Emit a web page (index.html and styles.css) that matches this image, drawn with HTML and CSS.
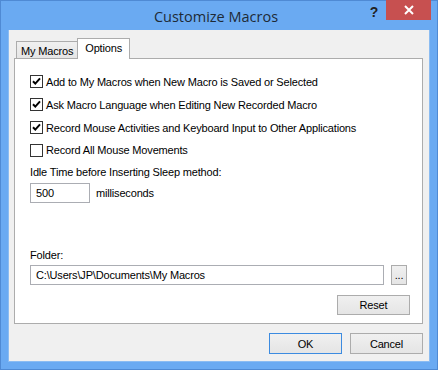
FILE: index.html
```html
<!DOCTYPE html>
<html lang="en">
<head>
  <meta charset="UTF-8">
  <meta name="viewport" content="width=device-width, initial-scale=1.0">
  <title>Customize Macros</title>
  <link rel="stylesheet" href="styles.css">
</head>
<body>
  <div class="window">
    <div class="titlebar">
      <div></div>
      <div class="title">Customize Macros</div>
      <div class="controls">
        <span class="help">?</span>
        <span class="close">
          <svg width="10" height="10" viewBox="0 0 10 10">
            <path d="M1 1 L9 9 M9 1 L1 9" stroke="#fff" stroke-width="2"/>
          </svg>
        </span>
      </div>
    </div>

    <div class="client">
      <div class="tabs">
        <div class="tab">My Macros</div>
        <div class="tab active">Options</div>
      </div>
      <div class="panel">
        <label class="check-row"><span class="box checked"></span>Add to My Macros when New Macro is Saved or Selected</label>
        <label class="check-row"><span class="box checked"></span>Ask Macro Language when Editing New Recorded Macro</label>
        <label class="check-row"><span class="box checked"></span>Record Mouse Activities and Keyboard Input to Other Applications</label>
        <label class="check-row short"><span class="box"></span>Record All Mouse Movements</label>
        <div class="label-row">Idle Time before Inserting Sleep method:</div>
        <div class="idle-row">
          <div class="field small">500</div>
          <span>milliseconds</span>
        </div>

        <div class="folder">
          <div class="label-row folder-label">Folder:</div>
          <div class="folder-row">
            <div class="field wide">C:\Users\JP\Documents\My Macros</div>
            <button class="btn dots">...</button>
          </div>
          <div class="reset-row">
            <button class="btn">Reset</button>
          </div>
        </div>
      </div>
      <div class="footer">
        <button class="btn default">OK</button>
        <button class="btn">Cancel</button>
      </div>
    </div>
  </div>
</body>
</html>
```

FILE: styles.css
```css
body {
  margin: 0;
  font-family: "Liberation Sans", Arial, sans-serif;
  font-size: 11px;
  letter-spacing: -0.17px;
  color: #000;
}
.window {
  width: 438px;
  height: 370px;
  box-sizing: border-box;
  border: 1px solid #4f8ad4;
  background-color: #6aaaf2;
  display: flex;
  flex-direction: column;
}
.titlebar {
  height: 29px;
  display: grid;
  grid-template-columns: 1fr auto 1fr;
  padding-right: 6px;
}
.title {
  font-family: "Open Sans", sans-serif;
  font-size: 14.5px;
  letter-spacing: 0;
  color: #1e2a36;
  align-self: center;
  padding-top: 1px;
}
.controls {
  justify-self: end;
  display: flex;
  align-items: flex-start;
}
.help {
  width: 24px;
  text-align: center;
  font-weight: bold;
  font-size: 14px;
  color: #222;
  padding-top: 3px;
}
.close {
  width: 45px;
  height: 20px;
  margin-top: -1px;
  background-color: #c75050;
  display: flex;
  align-items: center;
  justify-content: center;
}
.client {
  flex: 1;
  margin: 0 7px 7px 7px;
  background-color: #f0f0f0;
  border: 1px solid #8bbcf2;
  border-top: none;
  padding: 8px 6px 0 5px;
  display: flex;
  flex-direction: column;
}
.tabs {
  display: flex;
  align-items: flex-end;
  margin-left: 2px;
  margin-bottom: -1px;
  position: relative;
  z-index: 1;
}
.tab {
  border: 1px solid #acacac;
  border-bottom: none;
  height: 16px;
  line-height: 18px;
  padding: 0 4px;
  margin-bottom: 1px;
  background: linear-gradient(#f0f0f0, #e5e5e5);
}
.tab.active {
  height: 20px;
  line-height: 18px;
  margin-left: -1px;
  margin-bottom: 0;
  padding: 0 7px;
  background: #fff;
}
.panel {
  height: 266px;
  box-sizing: border-box;
  border: 1px solid #acacac;
  background-color: #fff;
  padding: 11px 12px 0 15px;
  display: flex;
  flex-direction: column;
}
.check-row {
  height: 23px;
  display: flex;
  align-items: center;
}
.check-row.short {
  height: 22px;
}
.box {
  width: 11px;
  height: 11px;
  border: 1px solid #333;
  background: #fff;
  margin-right: 3px;
  flex-shrink: 0;
}
.box.checked {
  background: #fff url("data:image/svg+xml;utf8,<svg xmlns='http://www.w3.org/2000/svg' width='11' height='11'><path d='M2 5.2 L4.3 7.6 L9 2.4' fill='none' stroke='black' stroke-width='2'/></svg>") no-repeat center;
}
.label-row {
  height: 22px;
  line-height: 22px;
}
.idle-row {
  display: flex;
  align-items: center;
  gap: 6px;
  height: 20px;
}
.field {
  height: 18px;
  line-height: 18px;
  border: 1px solid #abadb3;
  background: #fff;
  padding: 0 5px;
  box-sizing: content-box;
}
.field.small {
  width: 48px;
}
.folder {
  margin-top: auto;
  padding-bottom: 8px;
}
.folder-label {
  height: 19px;
  line-height: 18px;
}
.folder-row {
  display: flex;
  gap: 7px;
  padding-right: 3px;
}
.field.wide {
  flex: 1;
}
.btn {
  font-family: inherit;
  font-size: inherit;
  letter-spacing: inherit;
  color: #000;
  border: 1px solid #acacac;
  background: linear-gradient(#f0f0f0, #e5e5e5);
  padding: 0;
  width: 73px;
  height: 20px;
}
.btn.dots {
  width: 16px;
  height: 20px;
  line-height: 10px;
}
.reset-row {
  display: flex;
  justify-content: flex-end;
  margin-top: 10px;
}
.footer {
  display: flex;
  justify-content: flex-end;
  gap: 8px;
  margin-top: 9px;
}
.footer .btn {
  height: 21px;
}
.btn.default {
  border-color: #3c8be0;
}
```
